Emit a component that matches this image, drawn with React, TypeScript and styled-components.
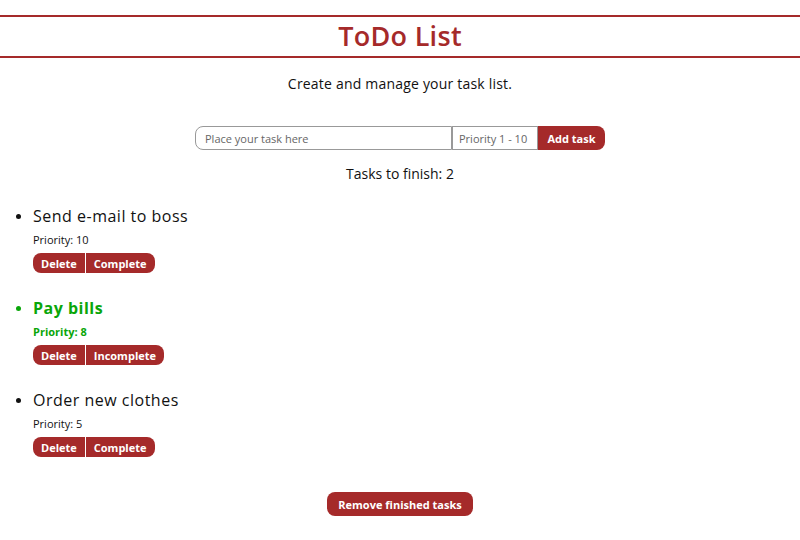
import React from "react";
import styled, { createGlobalStyle } from "styled-components";

const Global = createGlobalStyle`
  body { margin: 0; font-family: "Open Sans", "Noto Sans", sans-serif; color: #111; background: #fff; }
  * { box-sizing: border-box; }
`;

const RED = "#a52a2a";

const Header = styled.header`
  margin-top: 15px;
  border-top: 2px solid ${RED};
  border-bottom: 2px solid ${RED};
  height: 43px;
  display: flex;
  align-items: center;
  justify-content: center;
`;

const Title = styled.h1`
  margin: 0 0 2px;
  font-size: 27px;
  font-weight: 600;
  color: ${RED};
  letter-spacing: 0.3px;
`;

const Subtitle = styled.p`
  margin: 16px 0 0;
  text-align: center;
  font-size: 14px;
  line-height: 20px;
  letter-spacing: 0.2px;
`;

const Form = styled.div`
  margin-top: 32px;
  display: flex;
  justify-content: center;
`;

const TaskInput = styled.input`
  width: 257px;
  height: 24px;
  border: 1px solid #999;
  border-radius: 8px 0 0 8px;
  padding: 0 9px;
  font: inherit;
  font-size: 11px;
  color: #111;
  &::placeholder { color: #666; }
`;

const PriorityInput = styled(TaskInput)`
  width: 86px;
  border-radius: 0;
  padding: 0 6px;
`;

const Button = styled.button<{ $round?: string }>`
  background: ${RED};
  color: #fff;
  border: none;
  font: inherit;
  font-weight: 700;
  font-size: 11px;
  padding: 0 8px;
  cursor: pointer;
  border-radius: ${(p) => p.$round ?? "0"};
`;

const AddButton = styled(Button)`
  height: 24px;
  width: 67px;
`;

const Count = styled.p`
  margin: 14px 0 0;
  text-align: center;
  font-size: 14px;
  line-height: 20px;
`;

const List = styled.ul`
  margin: 22px 0 0;
  padding: 0 0 0 33px;
`;

const Item = styled.li<{ $done?: boolean }>`
  color: ${(p) => (p.$done ? "#0aa60a" : "#111")};
  font-weight: ${(p) => (p.$done ? 700 : 400)};
  margin-bottom: 25px;
  &::marker { font-size: 14px; }
`;

const ItemTitle = styled.div`
  font-size: 16px;
  line-height: 20px;
  letter-spacing: 0.5px;
`;

const Priority = styled.div`
  font-size: 11px;
  margin-top: 7px;
  line-height: 14px;
`;

const Actions = styled.div`
  margin-top: 6px;
  display: flex;
  gap: 1px;
`;

const SmallButton = styled(Button)`
  height: 20px;
`;

const Footer = styled.div`
  display: flex;
  justify-content: center;
  margin-top: 35px;
`;

const RemoveButton = styled(Button)`
  height: 24px;
  width: 146px;
`;

const tasks = [
  { title: "Send e-mail to boss", priority: 10, done: false },
  { title: "Pay bills", priority: 8, done: true },
  { title: "Order new clothes", priority: 5, done: false },
];

export default function App() {
  return (
    <>
      <Global />
      <Header>
        <Title>ToDo List</Title>
      </Header>
      <Subtitle>Create and manage your task list.</Subtitle>
      <Form>
        <TaskInput placeholder="Place your task here" />
        <PriorityInput placeholder="Priority 1 - 10" />
        <AddButton $round="0 8px 8px 0">Add task</AddButton>
      </Form>
      <Count>Tasks to finish: 2</Count>
      <List>
        {tasks.map((t) => (
          <Item key={t.title} $done={t.done}>
            <ItemTitle>{t.title}</ItemTitle>
            <Priority>Priority: {t.priority}</Priority>
            <Actions>
              <SmallButton $round="8px 0 0 8px">Delete</SmallButton>
              <SmallButton $round="0 8px 8px 0">{t.done ? "Incomplete" : "Complete"}</SmallButton>
            </Actions>
          </Item>
        ))}
      </List>
      <Footer>
        <RemoveButton $round="8px">Remove finished tasks</RemoveButton>
      </Footer>
    </>
  );
}
